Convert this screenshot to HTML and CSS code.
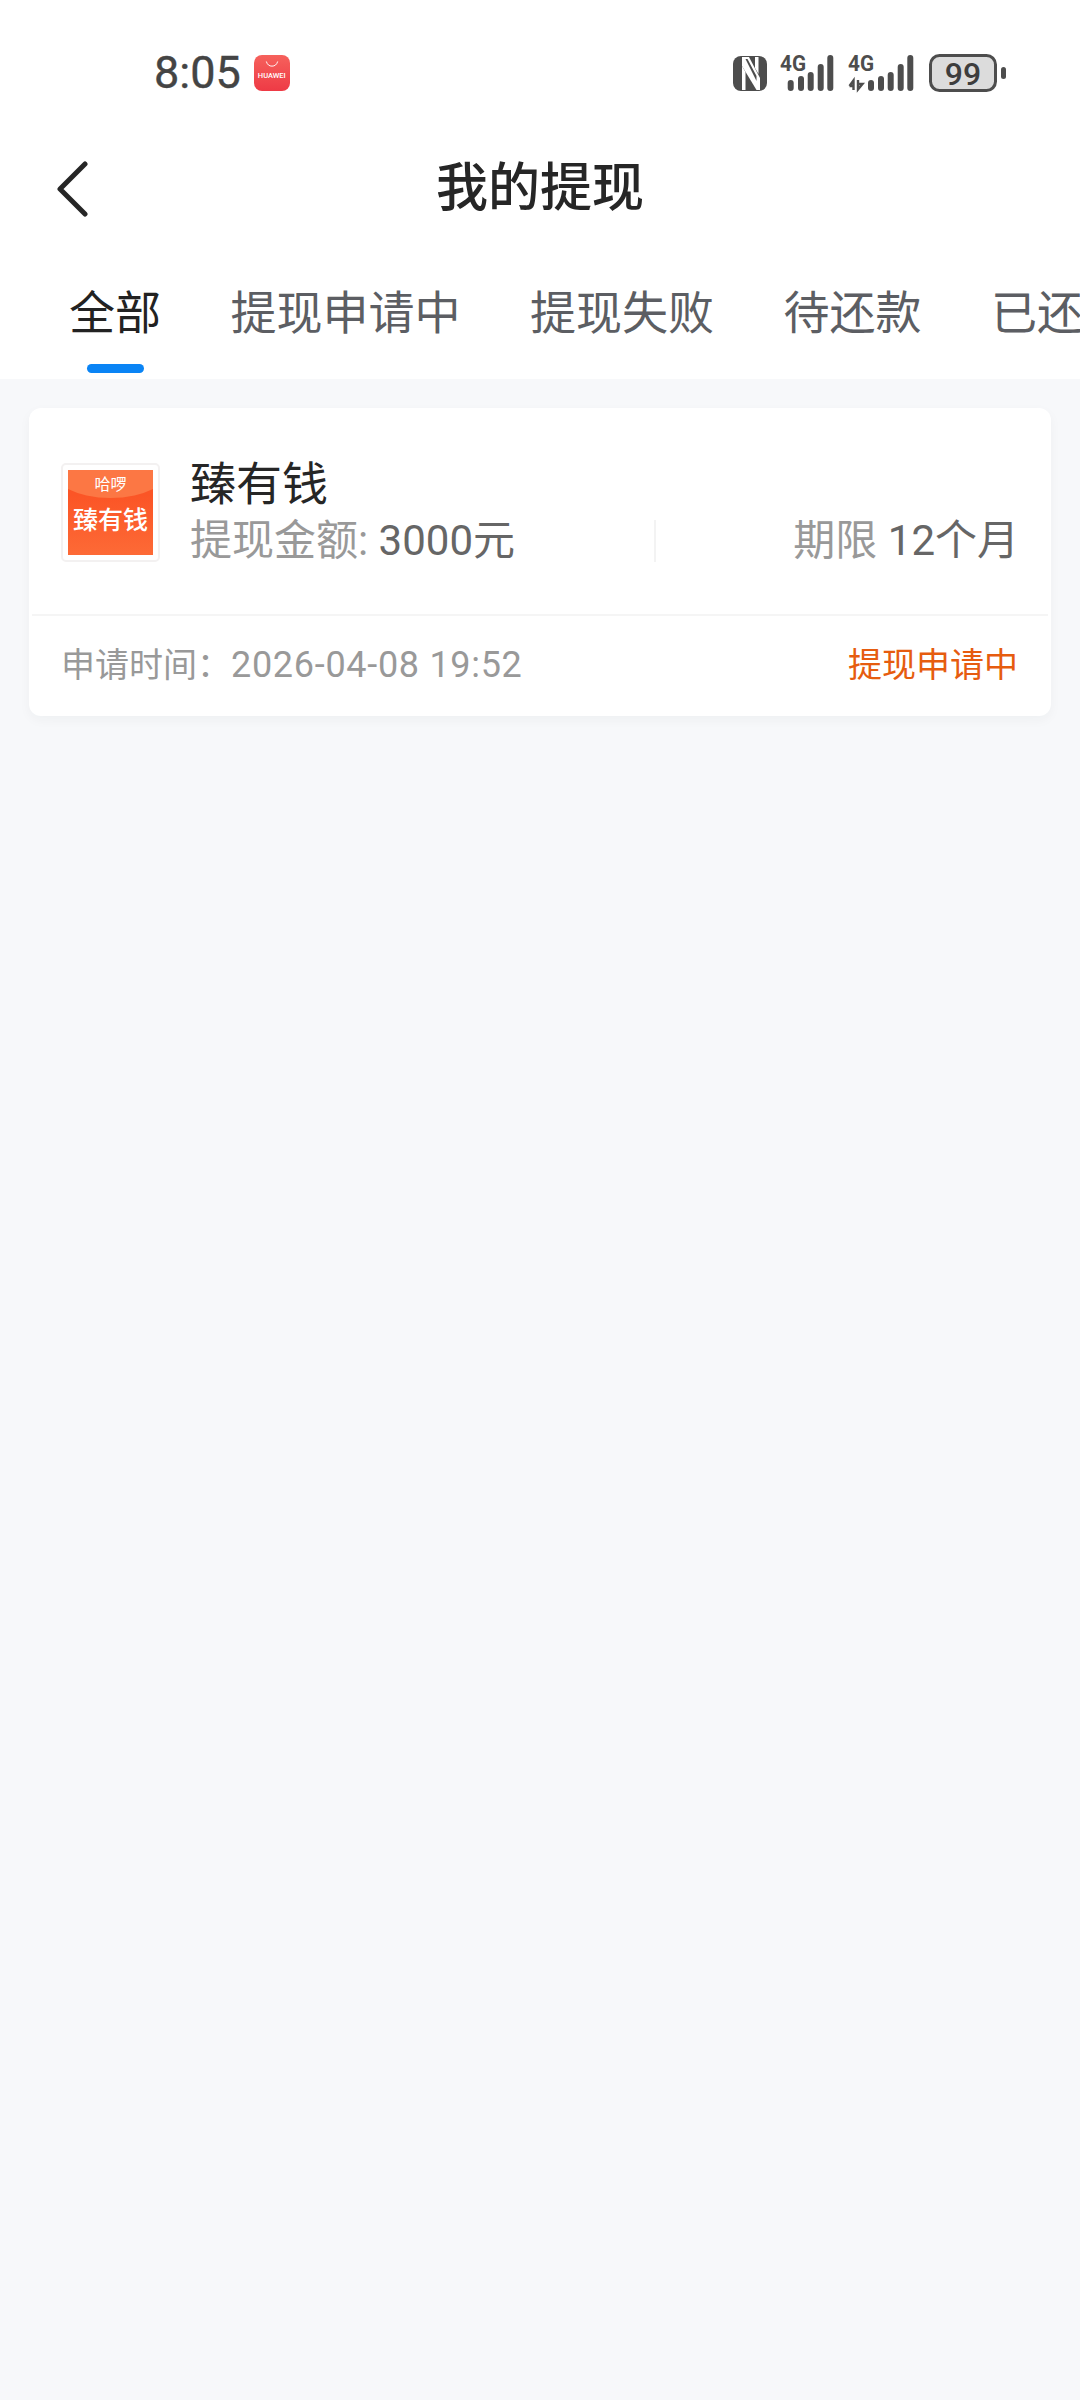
FILE: index.html
```html
<!DOCTYPE html>
<html lang="zh-CN">
<head>
<meta charset="utf-8">
<title>我的提现</title>
<link rel="stylesheet" href="styles.css">
</head>
<body>
<div class="app">
  <header class="top">
    <div class="status">
      <div class="status-left">
        <span class="time">8:05</span>
        <span class="store">
          <svg class="store-smile" viewBox="0 0 16 7"><path d="M1.500 1c1 3.500 3.500 5 6.500 5s5.500-1.500 6.500-5" fill="none" stroke="#fff" stroke-width="1.100" stroke-linecap="round"/></svg>
          <span class="store-text">HUAWEI</span>
        </span>
      </div>
      <div class="status-right">
        <svg class="ic-nfc" width="34" height="35" viewBox="0 0 34 35">
          <rect width="34" height="35" rx="8" fill="#4d4d4d"/>
          <path d="M9 1h7l11 21v12h-3.500L9 10z" fill="#fff"/>
          <path d="M9 10v24h3.500V16z" fill="#fff"/>
          <path d="M22 1h3.500v17L22 12z" fill="#fff"/>
          <path d="M12.500 3l2 0 9 17v5z" fill="#4d4d4d"/>
        </svg>
        <svg class="ic-sig" width="54" height="36" viewBox="0 0 54 36">
          <text class="sig-text" x="0" y="16" textLength="26" lengthAdjust="spacingAndGlyphs">4G</text>
          <g fill="#4d4d4d">
            <rect x="7.700" y="25" width="6" height="11" rx="3"/>
            <rect x="18" y="21" width="6" height="15" rx="3"/>
            <rect x="27.700" y="17" width="6" height="19" rx="3"/>
            <rect x="37.700" y="9" width="6" height="27" rx="3"/>
            <rect x="47.300" y="0" width="6" height="36" rx="3"/>
          </g>
        </svg>
        <svg class="ic-sig" width="66" height="36" viewBox="0 0 66 36">
          <text class="sig-text" x="0" y="16" textLength="26" lengthAdjust="spacingAndGlyphs">4G</text>
          <path d="M5.500 35V25.500L1.500 31M1.500 31h4M10 25v9.500l4.500-5.500h-4.500" fill="none" stroke="#4d4d4d" stroke-width="2.400"/>
          <g fill="#4d4d4d">
            <rect x="20" y="25" width="6" height="11" rx="3"/>
            <rect x="30" y="21" width="6" height="15" rx="3"/>
            <rect x="39.700" y="17" width="6" height="19" rx="3"/>
            <rect x="49.700" y="9" width="6" height="27" rx="3"/>
            <rect x="59.300" y="0" width="6" height="36" rx="3"/>
          </g>
        </svg>
        <svg class="ic-bat" width="78" height="38" viewBox="0 0 78 38">
          <rect x="1.500" y="1.500" width="65" height="35" rx="9" fill="#dcdcdc" stroke="#4d4d4d" stroke-width="3"/>
          <rect x="72" y="13" width="5" height="12" rx="2.500" fill="#4d4d4d"/>
          <text class="bat-text" x="34" y="30.500" text-anchor="middle">99</text>
        </svg>
      </div>
    </div>
    <nav class="nav">
      <a class="back" aria-label="返回">
        <svg width="34" height="60" viewBox="0 0 34 60"><path d="M31 5 6 30l25 25" fill="none" stroke="#262626" stroke-width="5" stroke-linecap="round" stroke-linejoin="round"/></svg>
      </a>
      <h1 class="title">我的提现</h1>
      <span></span>
    </nav>
    <div class="tabs">
      <div class="tab tab-active">全部</div>
      <div class="tab">提现申请中</div>
      <div class="tab">提现失败</div>
      <div class="tab">待还款</div>
      <div class="tab">已还款</div>
    </div>
  </header>
  <main class="list">
    <article class="card">
      <div class="card-main">
        <div class="logo">
          <div class="logo-art">
            <span class="logo-small">哈啰</span>
            <span class="logo-big">臻有钱</span>
          </div>
        </div>
        <div class="info">
          <div class="name">臻有钱</div>
          <div class="detail">
            <div class="amount"><span class="label">提现金额:</span> <span class="value">3000元</span></div>
            <i class="vline"></i>
            <div class="term"><span class="label">期限</span> <span class="value">12个月</span></div>
          </div>
        </div>
      </div>
      <div class="card-foot">
        <span class="apply-time">申请时间：<span class="apply-date">2026-04-08 19:52</span></span>
        <span class="state">提现申请中</span>
      </div>
    </article>
  </main>
</div>
</body>
</html>
```

FILE: styles.css
```css
* { box-sizing: border-box; }
html, body { margin: 0; padding: 0; }
body {
  font-family: "Roboto", "Noto Sans CJK SC", sans-serif;
  background: #f7f8fa;
  color: #262626;
}
.app { width: 1080px; height: 2400px; overflow: hidden; }
.top { background: #fff; height: 379px; }

.status {
  height: 141px;
  padding: 0 0 0 154px;
  display: flex;
  justify-content: space-between;
  align-items: flex-start;
}
.status-left { display: flex; align-items: center; gap: 13px; margin-top: 48px; height: 50px; }
.time { font-size: 45px; color: #444; line-height: 50px; -webkit-text-stroke: 0.4px #444; }
.store {
  width: 36px; height: 36px; border-radius: 8px;
  background: linear-gradient(#f6615c, #ee3a45);
  display: flex; flex-direction: column; align-items: center;
  padding-top: 6px;
}
.store-smile { width: 14px; height: 6px; display: block; }
.store-text { font-size: 7.500px; line-height: 8px; color: #fff; margin-top: 5px; font-weight: 500; white-space: nowrap; }
.status-right { display: flex; align-items: center; width: 347px; height: 38px; margin-top: 54px; }
.ic-nfc { flex: none; }
.ic-sig { flex: none; margin-left: 13px; overflow: visible; }
.ic-sig + .ic-sig { margin-left: 14px; }
.ic-bat { flex: none; margin-left: 15px; }
.sig-text { font-family: "Roboto", sans-serif; font-size: 22px; font-weight: 700; fill: #4d4d4d; }
.bat-text { font-family: "Roboto", sans-serif; font-size: 32px; font-weight: 500; fill: #3d3d3d; }

.nav {
  height: 96px;
  display: grid;
  grid-template-columns: 1fr auto 1fr;
  align-items: center;
  padding-left: 54px;
}
.back { display: block; width: 34px; height: 60px; }
.back svg { display: block; }
.title { margin: 0; font-size: 52px; line-height: 96px; font-weight: 500; color: #262626; position: relative; left: -27px; }

.tabs {
  height: 142px;
  display: flex;
  gap: 69.500px;
  padding: 46px 0 0 69px;
  overflow: hidden;
  white-space: nowrap;
}
.tab { position: relative; flex: none; font-size: 46px; line-height: 60px; color: #5c5e63; height: 60px; }
.tab-active { color: #222; }
.tab-active::after {
  content: "";
  position: absolute;
  left: 18px; top: 81px;
  width: 57px; height: 9px;
  border-radius: 5px;
  background: #0a84f5;
}

.list { padding: 29px 29px 0; }
.card {
  width: 1022px;
  height: 308px;
  background: #fff;
  border-radius: 12px;
  box-shadow: 0 4px 12px rgba(30, 40, 60, 0.04);
}
.card-main { height: 206px; display: flex; align-items: flex-start; padding: 55px 32px 0 32px; }
.logo {
  flex: none; width: 99px; height: 99px; padding: 5px;
  border: 2px solid #f3f1f1; border-radius: 5px; background: #fff;
}
.logo-art {
  position: relative;
  width: 100%; height: 100%; overflow: hidden;
  background: linear-gradient(#fb5526 30%, #fd6a36 100%);
  display: flex; flex-direction: column; align-items: center;
}
.logo-art::before {
  content: "";
  position: absolute;
  left: -20px; right: -20px; top: -40px;
  height: 68px;
  border-radius: 50%;
  background: #fc7744;
}
.logo-small { position: relative; font-size: 16px; line-height: 20px; margin-top: 5px; color: #fff; white-space: nowrap; }
.logo-big { position: relative; font-size: 25px; line-height: 30px; margin-top: 11px; color: #fff; font-weight: 500; white-space: nowrap; }
.info { flex: 1; margin-left: 30px; margin-top: -7px; }
.name { font-size: 46px; line-height: 56px; color: #262626; }
.detail { display: flex; align-items: center; height: 50px; margin-top: 4px; }
.amount { width: 464px; font-size: 42px; white-space: nowrap; line-height: 50px; }
.vline { flex: none; width: 2px; height: 42px; background: #f3f3f3; }
.term { flex: 1; text-align: right; font-size: 42px; line-height: 50px; white-space: nowrap; }
.label { color: #999; }
.value { color: #666; }

.card-foot {
  height: 102px;
  margin: 0 3px;
  border-top: 2px solid #f5f5f5;
  padding: 0 30px 7px 29px;
  display: flex; align-items: center; justify-content: space-between;
}
.apply-time { font-size: 34px; color: #999; white-space: nowrap; }
.apply-date { font-size: 36px; letter-spacing: 0.700px; }
.state { font-size: 34px; color: #e65c0f; white-space: nowrap; }
```
